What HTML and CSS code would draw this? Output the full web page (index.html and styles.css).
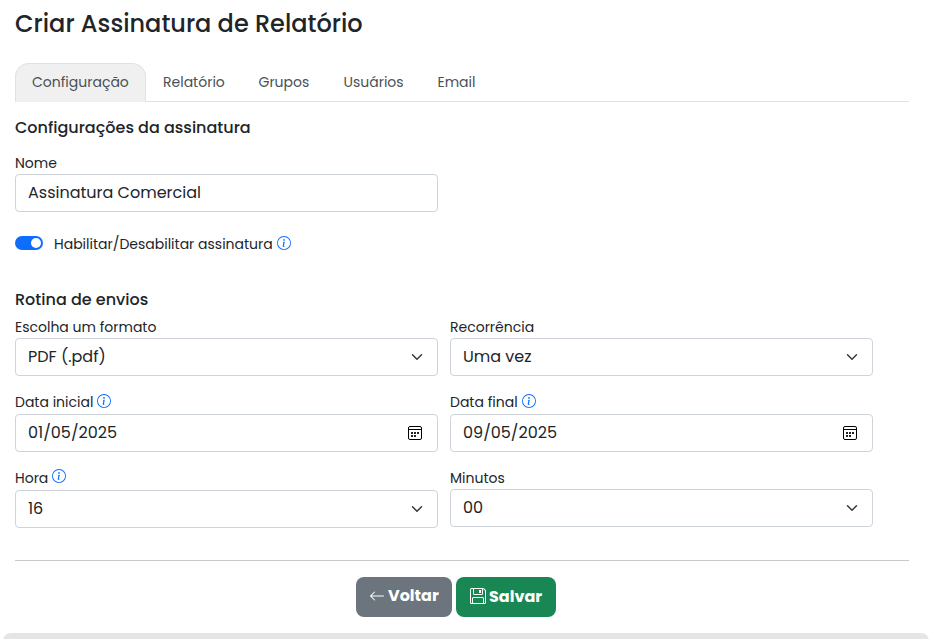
FILE: index.html
```html
<!DOCTYPE html>
<html lang="pt-BR">
<head>
<meta charset="utf-8">
<title>Criar Assinatura de Relatório</title>
<link rel="stylesheet" href="styles.css">
</head>
<body>
<svg class="sprite" aria-hidden="true">
  <symbol id="info" viewBox="0 0 16 16"><path d="M8 15A7 7 0 1 1 8 1a7 7 0 0 1 0 14m0 1A8 8 0 1 0 8 0a8 8 0 0 0 0 16"/><path d="m8.930 6.588-2.290.287-.082.380.450.083c.294.070.352.176.288.469l-.738 3.468c-.194.897.105 1.319.808 1.319.545 0 1.178-.252 1.465-.598l.088-.416c-.200.176-.492.246-.686.246-.275 0-.375-.193-.304-.533zM9 4.500a1 1 0 1 1-2 0 1 1 0 0 1 2 0"/></symbol>
  <symbol id="chevron" viewBox="0 0 16 16"><path fill="none" stroke="#343a40" stroke-linecap="round" stroke-linejoin="round" stroke-width="2" d="m2 5 6 6 6-6"/></symbol>
  <symbol id="calendar" viewBox="0 0 16 16"><path fill="none" stroke="#000" d="M3 1.500h10a1.500 1.500 0 0 1 1.500 1.500v10a1.500 1.500 0 0 1-1.500 1.500H3A1.500 1.500 0 0 1 1.500 13V3A1.500 1.500 0 0 1 3 1.500zM1.500 4.500h13"/><path d="M4 10h2v2H4zM7 10h2v2H7zM4 7h2v2H4zM7 7h2v2H7zM10 7h2v2h-2z"/></symbol>
</svg>
<main class="page">
  <h1 class="title">Criar Assinatura de Relatório</h1>
  <nav class="tabs">
    <a class="tab tab-active">Configuração</a>
    <a class="tab tab-report">Relatório</a>
    <a class="tab tab-groups">Grupos</a>
    <a class="tab tab-users">Usuários</a>
    <a class="tab">Email</a>
  </nav>
  <h2 class="section section-config">Configurações da assinatura</h2>
  <div class="name-field">
    <label class="label">Nome</label>
    <div class="control">Assinatura Comercial</div>
  </div>
  <div class="toggle-row">
    <span class="switch"><span class="knob"></span></span>
    <label class="label">Habilitar/Desabilitar assinatura <svg class="info"><use href="#info"/></svg></label>
  </div>
  <h2 class="section section-routine">Rotina de envios</h2>
  <div class="grid">
    <div class="field">
      <label class="label">Escolha um formato</label>
      <div class="control">PDF (.pdf)<svg class="chevron"><use href="#chevron"/></svg></div>
    </div>
    <div class="field">
      <label class="label">Recorrência</label>
      <div class="control">Uma vez<svg class="chevron"><use href="#chevron"/></svg></div>
    </div>
    <div class="field field-date">
      <label class="label">Data inicial<svg class="info"><use href="#info"/></svg></label>
      <div class="control">01/05/2025<svg class="calendar"><use href="#calendar"/></svg></div>
    </div>
    <div class="field field-date">
      <label class="label">Data final<svg class="info"><use href="#info"/></svg></label>
      <div class="control">09/05/2025<svg class="calendar"><use href="#calendar"/></svg></div>
    </div>
    <div class="field field-hour">
      <label class="label">Hora<svg class="info"><use href="#info"/></svg></label>
      <div class="control">16<svg class="chevron"><use href="#chevron"/></svg></div>
    </div>
    <div class="field">
      <label class="label">Minutos</label>
      <div class="control">00<svg class="chevron"><use href="#chevron"/></svg></div>
    </div>
  </div>
  <footer class="actions">
    <button class="btn btn-back"><svg class="arrow" viewBox="0 0 16 16"><path fill-rule="evenodd" d="M15 8a.5.5 0 0 0-.5-.5H2.707l3.147-3.146a.5.5 0 1 0-.708-.708l-4 4a.5.5 0 0 0 0 .708l4 4a.5.5 0 0 0 .708-.708L2.707 8.500H14.500A.5.5 0 0 0 15 8"/></svg><span>Voltar</span></button>
    <button class="btn btn-save"><svg class="floppy" viewBox="0 0 16 16"><path d="M11 2H9v3h2z"/><path d="M1.500 0h11.586a1.500 1.500 0 0 1 1.060.440l1.415 1.414A1.500 1.500 0 0 1 16 2.914V14.500a1.500 1.500 0 0 1-1.500 1.500h-13A1.500 1.500 0 0 1 0 14.500v-13A1.500 1.500 0 0 1 1.500 0M1 1.500v13a.5.5 0 0 0 .5.5H2v-4.500A1.500 1.500 0 0 1 3.500 9h9a1.500 1.500 0 0 1 1.500 1.500V15h.5a.5.5 0 0 0 .5-.5V2.914a.5.5 0 0 0-.146-.353l-1.415-1.415A.5.5 0 0 0 13.086 1H13v4.500A1.500 1.500 0 0 1 11.500 7h-7A1.500 1.500 0 0 1 3 5.500V1H1.500a.5.5 0 0 0-.5.5m3 4a.5.5 0 0 0 .5.5h7a.5.5 0 0 0 .5-.5V1H4zM3 15h10v-4.500a.5.5 0 0 0-.5-.5h-9a.5.5 0 0 0-.5.5z"/></svg><span>Salvar</span></button>
  </footer>
</main>
<div class="next-panel"></div>
</body>
</html>
```
FILE: styles.css
```css
* { box-sizing: border-box; }
body {
  margin: 0;
  height: 639px;
  overflow: hidden;
  background: #fff;
  color: #212529;
  font-family: Poppins, Inter, "Open Sans", sans-serif;
  font-size: 16px;
  white-space: nowrap;
}
svg { display: block; flex: none; fill: currentColor; }
.sprite { display: none; }
.page { height: 633px; padding: 8px 20px 0 15px; }
h1, h2 { margin: 0; font-weight: 500; }
.title { height: 55px; font-size: 24px; line-height: 31px; }
.tabs { display: flex; height: 39px; border-bottom: 1px solid #dee2e6; }
.tab { height: 39px; padding-left: 17px; font-size: 14px; line-height: 38px; color: #495057; }
.tab-active { width: 131px; padding-left: 16px; background: #f0f0f0; border: 1px solid #dee2e6; border-bottom-color: #f0f0f0; border-radius: 14px 14px 0 0; line-height: 36px; }
.tab-report { width: 95.500px; }
.tab-groups { width: 85px; }
.tab-users { width: 94px; }
.section { font-size: 16px; line-height: 20px; }
.section-config { margin-top: 16px; }
.label { display: flex; align-items: center; gap: 4px; height: 22px; font-size: 14px; }
.name-field { width: 423px; margin-top: 14px; }
.control { display: flex; align-items: center; justify-content: space-between; height: 38px; padding: 0 12px 2px; border: 1px solid #ced4da; border-radius: 4px; }
.toggle-row { display: flex; align-items: center; height: 22px; margin-top: 21px; }
.switch { display: flex; justify-content: flex-end; width: 28px; height: 14px; padding: 2px; margin: 0 11px 2px 0; border-radius: 7px; background: #0d6efd; }
.knob { width: 10px; height: 10px; border-radius: 50%; background: #fff; }
.info { width: 14px; height: 14px; margin-bottom: 2px; color: #0d6efd; }
.section-routine { margin-top: 35px; }
.grid { display: grid; grid-template-columns: 423px 423px; column-gap: 12px; grid-template-rows: 76px 75px 62px; margin-top: 6px; }
.field-date .label { padding-bottom: 2px; }
.field-hour .label { height: 23px; padding-bottom: 1px; }
.field-hour .info { margin-bottom: 4px; }
.chevron { width: 12px; height: 12px; margin: 2px 2px 0 0; }
.calendar { width: 16px; height: 16px; margin: 2px 2px 0 0; }
.actions { display: flex; justify-content: center; gap: 4px; margin-top: 31px; padding: 16px 12px 0 0; border-top: 1px solid #c8c9ca; }
.btn { display: flex; align-items: center; height: 40px; padding: 0 0 3px 13px; border: 0; border-radius: 8px; color: #fff; font: 700 16px Poppins, Inter, sans-serif; }
.btn-back { width: 96px; background: #6c757d; }
.btn-save { width: 100px; background: #198754; padding-bottom: 1px; }
.arrow, .floppy { width: 16px; height: 16px; margin-right: 3px; }
.floppy { margin: 0 3px 1px 1px; }
.next-panel { height: 20px; margin-left: 3px; background: #e5e5e5; border-radius: 8px 8px 0 0; }
```
